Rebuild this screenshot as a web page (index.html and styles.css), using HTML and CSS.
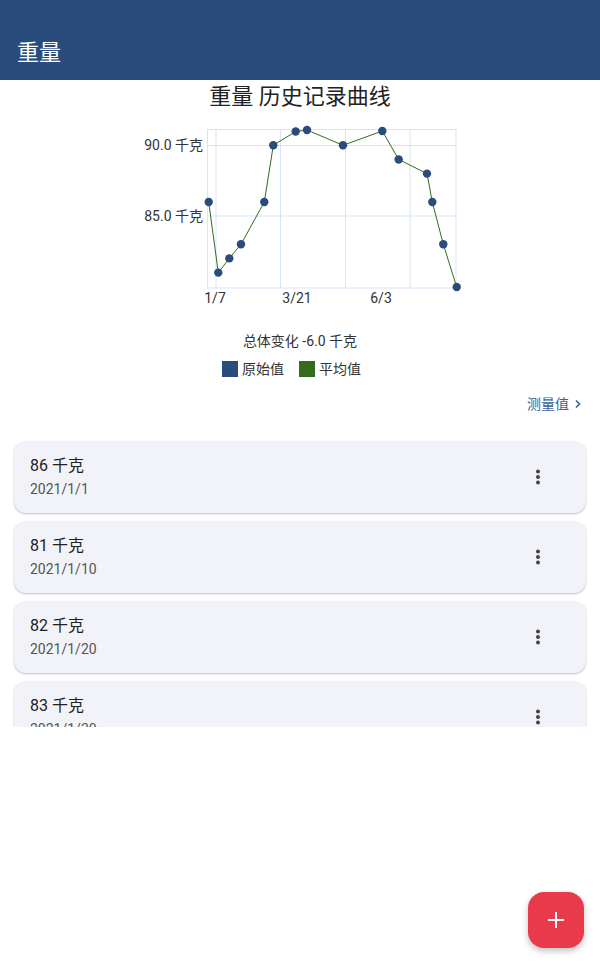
FILE: index.html
```html
<!DOCTYPE html>
<html lang="zh">
<head>
    <meta charset="UTF-8">
    <meta name="viewport" content="width=device-width, initial-scale=1.0">
    <title>重量</title>
    <link rel="stylesheet" href="styles.css">
</head>
<body>
    <div class="appbar">重量</div>

    <div class="chart">
        <h2>重量 历史记录曲线</h2>
        <svg class="plot" width="340" height="200" viewBox="0 0 340 200">
            <rect x="77.5" y="15.5" width="248.5" height="158.5" fill="none" stroke="#d5e3fb"/>
            <g stroke="#d5e3fb" stroke-width="1">
                <line x1="86" y1="15" x2="86" y2="174"/>
                <line x1="150.5" y1="15" x2="150.5" y2="174"/>
                <line x1="215.5" y1="15" x2="215.5" y2="174"/>
                <line x1="280" y1="15" x2="280" y2="174"/>
                <line x1="77" y1="31.5" x2="326" y2="31.5"/>
                <line x1="77" y1="102" x2="326" y2="102"/>
            </g>
            <g class="axis" text-anchor="end">
                <text x="73" y="36">90.0 千克</text>
                <text x="73" y="107">85.0 千克</text>
            </g>
            <g class="axis" text-anchor="middle">
                <text x="85" y="189">1/7</text>
                <text x="167" y="189">3/21</text>
                <text x="251" y="189">6/3</text>
            </g>
            <polyline fill="none" stroke="#336b1f" stroke-width="1"
                points="78.7,88 88.3,158.6 99.3,144.4 111,130.3 134.3,88 143.3,31.3 165.7,17.5 177,16 213,31.3 252.3,17 268.7,45.5 297,59.6 302.3,88 313.3,130.3 326.7,173"/>
            <g fill="#2a4c7d">
                <circle cx="78.7" cy="88" r="4.2"/>
                <circle cx="88.3" cy="158.6" r="4.2"/>
                <circle cx="99.3" cy="144.4" r="4.2"/>
                <circle cx="111" cy="130.3" r="4.2"/>
                <circle cx="134.3" cy="88" r="4.2"/>
                <circle cx="143.3" cy="31.3" r="4.2"/>
                <circle cx="165.7" cy="17.5" r="4.2"/>
                <circle cx="177" cy="16" r="4.2"/>
                <circle cx="213" cy="31.3" r="4.2"/>
                <circle cx="252.3" cy="17" r="4.2"/>
                <circle cx="268.7" cy="45.5" r="4.2"/>
                <circle cx="297" cy="59.6" r="4.2"/>
                <circle cx="302.3" cy="88" r="4.2"/>
                <circle cx="313.3" cy="130.3" r="4.2"/>
                <circle cx="326.7" cy="173" r="4.2"/>
            </g>
        </svg>
        <div class="summary">总体变化 -6.0 千克</div>
        <div class="legend">
            <span class="key"><i class="swatch raw"></i>原始值</span>
            <span class="key"><i class="swatch avg"></i>平均值</span>
        </div>
    </div>

    <div class="more">
        <a href="#">测量值
            <svg width="12" height="12" viewBox="0 0 12 12"><path d="M4 2.5 7.5 6 4 9.5" fill="none" stroke="currentColor" stroke-width="1.6"/></svg>
        </a>
    </div>

    <div class="list">
        <div class="card">
            <div class="info">
                <div class="value">86 千克</div>
                <div class="date">2021/1/1</div>
            </div>
            <svg class="kebab" width="24" height="24" viewBox="0 0 24 24"><circle cx="12" cy="6.5" r="2"/><circle cx="12" cy="12" r="2"/><circle cx="12" cy="17.5" r="2"/></svg>
        </div>
        <div class="card">
            <div class="info">
                <div class="value">81 千克</div>
                <div class="date">2021/1/10</div>
            </div>
            <svg class="kebab" width="24" height="24" viewBox="0 0 24 24"><circle cx="12" cy="6.5" r="2"/><circle cx="12" cy="12" r="2"/><circle cx="12" cy="17.5" r="2"/></svg>
        </div>
        <div class="card">
            <div class="info">
                <div class="value">82 千克</div>
                <div class="date">2021/1/20</div>
            </div>
            <svg class="kebab" width="24" height="24" viewBox="0 0 24 24"><circle cx="12" cy="6.5" r="2"/><circle cx="12" cy="12" r="2"/><circle cx="12" cy="17.5" r="2"/></svg>
        </div>
        <div class="card">
            <div class="info">
                <div class="value">83 千克</div>
                <div class="date">2021/1/30</div>
            </div>
            <svg class="kebab" width="24" height="24" viewBox="0 0 24 24"><circle cx="12" cy="6.5" r="2"/><circle cx="12" cy="12" r="2"/><circle cx="12" cy="17.5" r="2"/></svg>
        </div>
    </div>

    <button class="fab">
        <svg width="18" height="18" viewBox="0 0 18 18"><path d="M9 1v16M1 9h16" stroke="#fff" stroke-width="2"/></svg>
    </button>
</body>
</html>
```

FILE: styles.css
```css
body {
    font-family: Roboto, "Noto Sans CJK SC", sans-serif;
    margin: 0;
    padding: 0;
    background: #ffffff;
    color: #222;
}
.appbar {
    height: 80px;
    box-sizing: border-box;
    padding: 38px 17px 0;
    background: #2a4c7d;
    color: #ffffff;
    font-size: 22px;
    line-height: 30px;
}
.chart {
    text-align: center;
}
.chart h2 {
    margin: 0;
    font-size: 22px;
    font-weight: normal;
    line-height: 34px;
    color: #222;
}
.plot {
    display: block;
    margin: 0 auto;
}
.axis {
    font-size: 14px;
    fill: #333;
}
.summary {
    padding-top: 17px;
    font-size: 14px;
    line-height: 20px;
    color: #333;
}
.legend {
    margin-top: 8px;
    padding-right: 17px;
    display: flex;
    justify-content: center;
    gap: 15px;
    font-size: 14px;
    line-height: 20px;
    color: #333;
}
.key {
    display: flex;
    align-items: center;
    gap: 4px;
}
.swatch {
    width: 16px;
    height: 16px;
}
.swatch.raw {
    background: #2a4c7d;
}
.swatch.avg {
    background: #336b1f;
}
.more {
    margin-top: 15px;
    padding-right: 16px;
    display: flex;
    justify-content: flex-end;
}
.more a {
    display: flex;
    align-items: center;
    gap: 3px;
    font-size: 14px;
    line-height: 20px;
    color: #3f6194;
    text-decoration: none;
}
.list {
    margin-top: 19px;
    height: 294px;
    box-sizing: border-box;
    overflow: hidden;
    padding: 8px 14px;
    display: flex;
    flex-direction: column;
    gap: 8px;
}
.card {
    flex-shrink: 0;
    height: 72px;
    box-sizing: border-box;
    padding: 14px 36px 14px 16px;
    display: flex;
    align-items: center;
    justify-content: space-between;
    background: #f2f3f8;
    border-radius: 12px;
    box-shadow: 0 1px 2px rgba(0, 0, 0, 0.25);
}
.value {
    font-size: 16px;
    line-height: 22px;
    color: #222;
}
.date {
    margin-top: 2px;
    font-size: 14px;
    line-height: 20px;
    color: #555;
}
.kebab {
    fill: #444;
}
.fab {
    position: fixed;
    right: 16px;
    bottom: 16px;
    width: 56px;
    height: 56px;
    border: none;
    border-radius: 16px;
    background: #e83a4a;
    box-shadow: 0 3px 6px rgba(0, 0, 0, 0.25);
    display: flex;
    align-items: center;
    justify-content: center;
    cursor: pointer;
}
```
